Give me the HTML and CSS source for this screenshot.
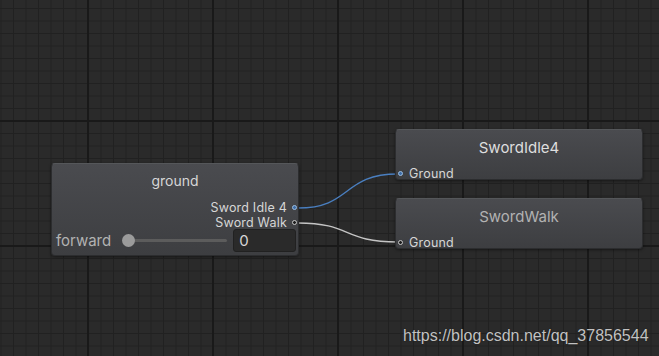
FILE: index.html
```html
<!DOCTYPE html>
<html lang="en">
<head>
    <meta charset="UTF-8">
    <meta name="viewport" content="width=device-width, initial-scale=1.0">
    <title>Blend Tree - ground</title>
    <link rel="stylesheet" href="styles.css">
</head>
<body>
    <main class="graph">
        <!-- Connection wires between the blend node and its motions -->
        <svg class="wires" width="659" height="356" viewBox="0 0 659 356">
            <path class="wire wire-active" d="M298 208 C352 208 342 174 398 174"/>
            <path class="wire" d="M298 223 C352 223 342 242 398 242"/>
        </svg>

        <section class="node node-blend">
            <h3 class="node-title">ground</h3>
            <div class="outputs">
                <div class="port-out">Sword Idle 4 <span class="dot dot-active"></span></div>
                <div class="port-out">Sword Walk <span class="dot"></span></div>
            </div>
            <div class="param-row">
                <span class="param-name">forward</span>
                <div class="slider"><span class="knob"></span></div>
                <div class="value-field">0</div>
            </div>
        </section>

        <section class="node node-motion node-idle">
            <h3 class="node-title">SwordIdle4</h3>
            <div class="port-in"><span class="dot dot-active"></span>Ground</div>
        </section>

        <section class="node node-motion node-walk">
            <h3 class="node-title node-title-dim">SwordWalk</h3>
            <div class="port-in"><span class="dot"></span>Ground</div>
        </section>

        <p class="watermark">https://blog.csdn.net/qq_37856544</p>
    </main>
</body>
</html>
```

FILE: styles.css
```css
/* Editor palette */
:root {
    --canvas-bg: #2a2a2a;
    --grid-minor: #212121;
    --grid-major: #191919;
    --node-top: #4a4b4f;
    --node-bottom: #3d3e41;
    --text-color: #d6d6d6;
    --text-dim: #b2b2b2;
    --wire-blue: #4a7fc0;
    --wire-grey: #c4c4c4;
}

* {
    margin: 0;
    padding: 0;
    box-sizing: border-box;
}

html, body {
    width: 100%;
    height: 100%;
    overflow: hidden;
}

body {
    font-family: Inter, "Noto Sans", sans-serif;
    color: var(--text-color);
    background: var(--canvas-bg);
}

/* Graph canvas with minor/major grid lines */
.graph {
    position: relative;
    width: 659px;
    height: 356px;
    background-color: var(--canvas-bg);
    background-image:
        linear-gradient(to right, var(--grid-major) 2px, transparent 2px),
        linear-gradient(to bottom, var(--grid-major) 2px, transparent 2px),
        linear-gradient(to right, var(--grid-minor) 1px, transparent 1px),
        linear-gradient(to bottom, var(--grid-minor) 1px, transparent 1px);
    background-size: 125px 125px, 125px 125px, 12.5px 12.5px, 12.5px 12.5px;
    background-position: 87px 120px, 87px 120px, 0.5px 8px, 0.5px 8px;
}

.wires {
    position: absolute;
    left: 0;
    top: 0;
}

.wire {
    fill: none;
    stroke: var(--wire-grey);
    stroke-width: 1.4;
}

.wire-active {
    stroke: var(--wire-blue);
}

/* Nodes */
.node {
    position: absolute;
    width: 248px;
    background: linear-gradient(to bottom, var(--node-top), var(--node-bottom));
    border: 1px solid #2c2d2f;
    border-top-color: #55575a;
    border-radius: 4px;
    box-shadow: 0 1px 3px rgba(0,0,0,0.45);
}

.node-title {
    font-size: 14px;
    font-weight: 400;
    text-align: center;
    color: var(--text-color);
}

.node-title-dim {
    color: var(--text-dim);
}

.node-blend {
    left: 51px;
    top: 163px;
    height: 93px;
    padding-top: 8px;
}

.node-motion {
    left: 395px;
    height: 51px;
    padding-top: 8px;
    display: flex;
    flex-direction: column;
    justify-content: space-between;
    padding-bottom: 0;
}

.node-idle { top: 129px; }
.node-walk { top: 198px; }

.node-motion .node-title {
    font-size: 15px;
    line-height: 20px;
    color: #dedede;
}

.node-motion .node-title-dim {
    color: var(--text-dim);
}

/* Ports */
.outputs {
    display: flex;
    flex-direction: column;
    align-items: flex-end;
    margin-top: 11px;
    padding-right: 1px;
}

.port-out {
    display: flex;
    align-items: center;
    gap: 5px;
    font-size: 12.5px;
    line-height: 15px;
    letter-spacing: 0.2px;
}

.port-in {
    display: flex;
    align-items: center;
    gap: 6px;
    font-size: 12.5px;
    line-height: 11px;
    padding-left: 2px;
    letter-spacing: 0.2px;
}

.dot {
    display: inline-block;
    width: 5px;
    height: 5px;
    border-radius: 50%;
    background: #1e1e1e;
    border: 1px solid #c8c8c8;
}

.dot-active {
    background: #3d6da8;
    border-color: #9cbde0;
}

/* Parameter row */
.param-row {
    display: flex;
    align-items: center;
    margin-top: -1px;
    padding: 0 2px 0 4px;
}

.param-name {
    font-size: 15px;
    color: var(--text-dim);
    width: 68px;
}

.slider {
    position: relative;
    width: 104px;
    height: 3px;
    background: #5c5c5c;
    border-radius: 2px;
    margin-right: 6px;
}

.knob {
    position: absolute;
    left: -2px;
    top: -5px;
    width: 13px;
    height: 13px;
    border-radius: 50%;
    background: #9b9b9b;
}

.value-field {
    width: 63px;
    height: 23px;
    background: #2a2a2a;
    border: 1px solid #212121;
    border-radius: 3px;
    font-size: 15px;
    line-height: 22px;
    padding-left: 5px;
    color: var(--text-color);
}

/* Watermark */
.watermark {
    position: absolute;
    left: 403px;
    top: 327px;
    font-family: "Liberation Sans", Arial, sans-serif;
    font-size: 16px;
    color: #c2c2c2;
    text-shadow: 0 0 1px rgba(0,0,0,0.6);
}
```
